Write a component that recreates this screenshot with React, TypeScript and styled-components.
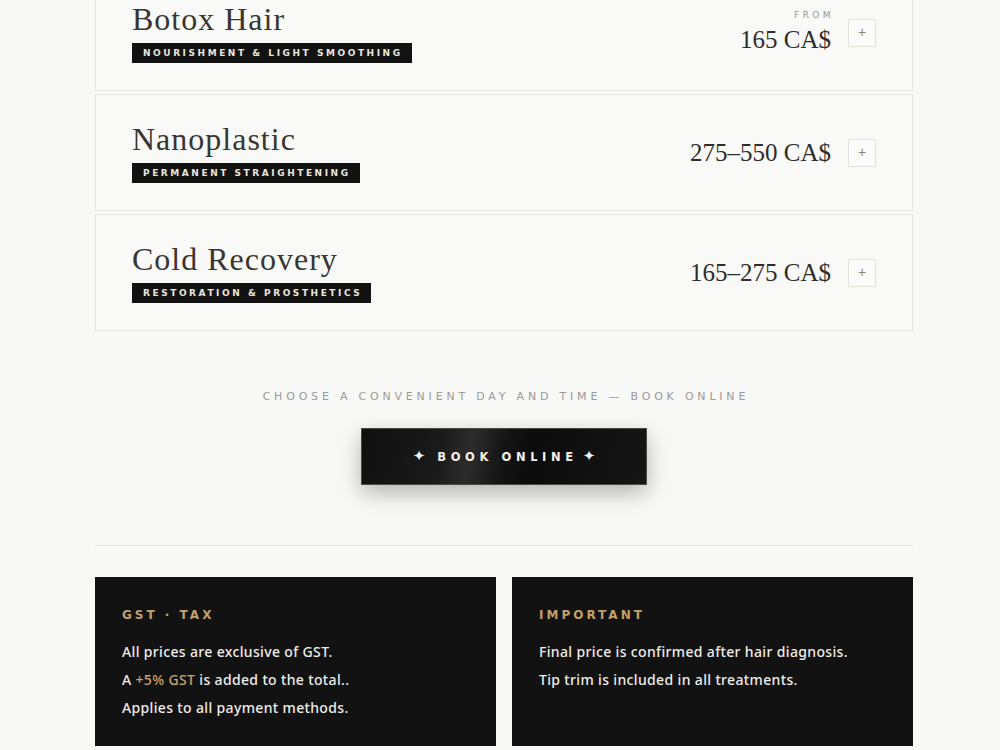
import React from "react";
import styled, { createGlobalStyle } from "styled-components";

const GlobalStyle = createGlobalStyle`
  html, body {
    margin: 0;
    padding: 0;
    background: #f8f8f6;
  }
  body {
    font-family: "Noto Sans", "DejaVu Sans", sans-serif;
    overflow: hidden;
  }
`;

const Page = styled.main`
  width: 818px;
  margin: -26px 0 0 95px;
  display: flex;
  flex-direction: column;
`;

const ServiceList = styled.div`
  display: flex;
  flex-direction: column;
  gap: 3px;
`;

const ServiceCard = styled.article`
  height: 117px;
  box-sizing: border-box;
  border: 1px solid #e6e4e0;
  background: #f9f9f7;
  padding: 0 36px;
  display: flex;
  align-items: center;
  justify-content: space-between;
`;

const ServiceInfo = styled.div`
  display: flex;
  flex-direction: column;
  align-items: flex-start;
  margin-bottom: 3px;
`;

const ServiceTitle = styled.h3`
  margin: 0;
  font-family: "Liberation Serif", "Times New Roman", serif;
  font-weight: 400;
  font-size: 32px;
  line-height: 38px;
  letter-spacing: 1px;
  color: #383633;
`;

const Tag = styled.span`
  margin-top: 5px;
  display: inline-block;
  background: #121212;
  color: #e9e5dd;
  font-family: "DejaVu Sans", sans-serif;
  font-weight: 700;
  font-size: 9px;
  line-height: 20px;
  letter-spacing: 2.55px;
  padding: 0 9px 0 11px;
`;

const PriceSide = styled.div`
  display: flex;
  align-items: center;
  gap: 17px;
`;

const PriceBlock = styled.div`
  display: flex;
  flex-direction: column;
  align-items: flex-end;
`;

const FromLabel = styled.span`
  font-family: "DejaVu Sans", sans-serif;
  font-size: 9px;
  letter-spacing: 3.4px;
  color: #9a9892;
  margin: 0 -3px 3px 0;
  line-height: 12px;
`;

const Price = styled.span`
  font-family: "Liberation Serif", "Times New Roman", serif;
  font-size: 25px;
  line-height: 32px;
  color: #2f2d2a;
`;

const ExpandButton = styled.button`
  width: 28px;
  height: 28px;
  box-sizing: border-box;
  border: 1px solid #e3e1dc;
  background: #fbfbfa;
  color: #86847f;
  font-family: "Liberation Sans", sans-serif;
  font-weight: 300;
  font-size: 14px;
  line-height: 1;
  padding: 0 0 1px;
  display: flex;
  align-items: center;
  justify-content: center;
  cursor: pointer;
`;

const BookSection = styled.section`
  display: flex;
  flex-direction: column;
  align-items: center;
  padding: 59px 0 0;
`;

const BookHint = styled.p`
  margin: 0;
  font-family: "DejaVu Sans", sans-serif;
  font-size: 11px;
  letter-spacing: 3.8px;
  color: #9c9a97;
  line-height: 14px;
  margin-right: -3.8px;
`;

const BookButton = styled.button`
  margin-top: 24px;
  width: 286px;
  height: 57px;
  border: 1px solid #4a4a4a;
  background: linear-gradient(
    100deg,
    #101010 0%,
    #1a1a1a 28%,
    #2c2c2c 38%,
    #141414 50%,
    #0b0b0b 60%,
    #161616 100%
  );
  box-shadow: 0 8px 22px rgba(0, 0, 0, 0.28);
  color: #f4f2ee;
  font-family: "DejaVu Sans", sans-serif;
  font-weight: 700;
  font-size: 11.5px;
  letter-spacing: 4.6px;
  cursor: pointer;
  display: flex;
  align-items: center;
  justify-content: center;
`;

const Sparkle = styled.span<{ $side: "left" | "right" }>`
  font-size: 15px;
  letter-spacing: 0;
  line-height: 1;
  margin: ${({ $side }) => ($side === "left" ? "0 12px 0 0" : "0 0 0 5px")};
`;

const Divider = styled.hr`
  margin: 60px 0 0;
  border: 0;
  border-top: 1px solid #e6e4e0;
`;

const NoteGrid = styled.div`
  margin-top: 31px;
  display: grid;
  grid-template-columns: 1fr 1fr;
  gap: 16px;
`;

const NoteCard = styled.div`
  background: #121212;
  height: 169px;
  box-sizing: border-box;
  padding: 29px 27px;
`;

const NoteTitle = styled.h4`
  margin: 0 0 14px;
  font-family: "DejaVu Sans", sans-serif;
  font-weight: 700;
  font-size: 12px;
  letter-spacing: 3px;
  line-height: 18px;
  color: #c2a06a;
`;

const NoteLine = styled.p`
  margin: 0;
  font-family: "Noto Sans", sans-serif;
  font-weight: 500;
  font-size: 14px;
  line-height: 28px;
  letter-spacing: 0.35px;
  color: #efede9;
`;

const Accent = styled.span`
  color: #c9a66b;
`;

type Service = {
  title: string;
  tag: string;
  price: string;
  from?: boolean;
};

const services: Service[] = [
  { title: "Botox Hair", tag: "NOURISHMENT & LIGHT SMOOTHING", price: "165 CA$", from: true },
  { title: "Nanoplastic", tag: "PERMANENT STRAIGHTENING", price: "275–550 CA$" },
  { title: "Cold Recovery", tag: "RESTORATION & PROSTHETICS", price: "165–275 CA$" },
];

export default function App() {
  return (
    <>
      <GlobalStyle />
      <Page>
        <ServiceList>
          {services.map((s) => (
            <ServiceCard key={s.title}>
              <ServiceInfo>
                <ServiceTitle>{s.title}</ServiceTitle>
                <Tag>{s.tag}</Tag>
              </ServiceInfo>
              <PriceSide>
                <PriceBlock>
                  {s.from && <FromLabel>FROM</FromLabel>}
                  <Price>{s.price}</Price>
                </PriceBlock>
                <ExpandButton aria-label="Expand">+</ExpandButton>
              </PriceSide>
            </ServiceCard>
          ))}
        </ServiceList>

        <BookSection>
          <BookHint>CHOOSE A CONVENIENT DAY AND TIME — BOOK ONLINE</BookHint>
          <BookButton>
            <Sparkle $side="left">✦</Sparkle>
            BOOK ONLINE
            <Sparkle $side="right">✦</Sparkle>
          </BookButton>
        </BookSection>

        <Divider />

        <NoteGrid>
          <NoteCard>
            <NoteTitle>GST · TAX</NoteTitle>
            <NoteLine>All prices are exclusive of GST.</NoteLine>
            <NoteLine>
              A <Accent>+5% GST</Accent> is added to the total..
            </NoteLine>
            <NoteLine>Applies to all payment methods.</NoteLine>
          </NoteCard>
          <NoteCard>
            <NoteTitle>IMPORTANT</NoteTitle>
            <NoteLine>Final price is confirmed after hair diagnosis.</NoteLine>
            <NoteLine>Tip trim is included in all treatments.</NoteLine>
          </NoteCard>
        </NoteGrid>
      </Page>
    </>
  );
}
